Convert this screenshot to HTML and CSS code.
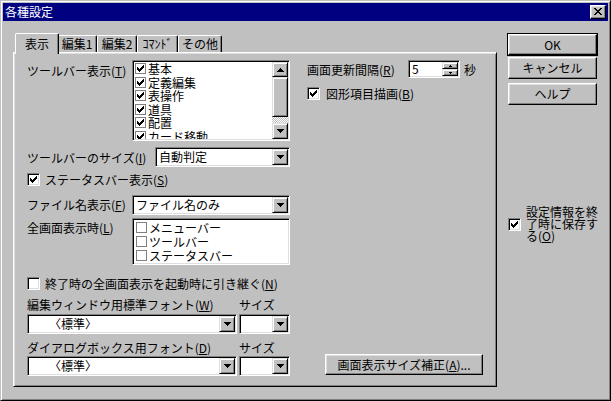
FILE: index.html
```html
<!DOCTYPE html>
<html lang="ja">
<head>
<meta charset="utf-8">
<title>各種設定</title>
<link rel="stylesheet" href="styles.css">
</head>
<body>
<div class="window">
  <div class="titlebar">
    <span class="title">各種設定</span>
    <span class="close-btn">
      <svg class="px" width="8" height="7" viewBox="0 0 8 7"><path d="M0 0h2v1h-2zM6 0h2v1h-2zM1 1h2v1h-2zM5 1h2v1h-2zM2 2h4v1h-4zM3 3h2v1h-2zM2 4h4v1h-4zM1 5h2v1h-2zM5 5h2v1h-2zM0 6h2v1h-2zM6 6h2v1h-2z"/></svg>
    </span>
  </div>
  <div class="body">
    <div class="tabarea">
      <div class="tabs">
        <div class="tab active w44">表示</div>
        <div class="tab w38">編集1</div>
        <div class="tab w40">編集2</div>
        <div class="tab w41">ｺﾏﾝﾄﾞ</div>
        <div class="tab w44b">その他</div>
      </div>
      <div class="panel">
        <div class="col-left">
          <div class="row r-toolbar">
            <div class="lbl lbl105 pt4">ツールバー表示(<u>T</u>)</div>
            <div class="listbox lb-toolbar">
              <div class="items items-toolbar">
                <div class="item"><span class="mini-chk"><svg class="px" width="9" height="9" viewBox="0 0 9 9"><path d="M7 1h1v1h-1zM6 2h2v1h-2zM1 3h1v1h-1zM5 3h3v1h-3zM1 4h2v1h-2zM4 4h3v1h-3zM1 5h5v1h-5zM2 6h3v1h-3zM3 7h1v1h-1z"/></svg></span>基本</div>
                <div class="item"><span class="mini-chk"><svg class="px" width="9" height="9" viewBox="0 0 9 9"><path d="M7 1h1v1h-1zM6 2h2v1h-2zM1 3h1v1h-1zM5 3h3v1h-3zM1 4h2v1h-2zM4 4h3v1h-3zM1 5h5v1h-5zM2 6h3v1h-3zM3 7h1v1h-1z"/></svg></span>定義編集</div>
                <div class="item"><span class="mini-chk"><svg class="px" width="9" height="9" viewBox="0 0 9 9"><path d="M7 1h1v1h-1zM6 2h2v1h-2zM1 3h1v1h-1zM5 3h3v1h-3zM1 4h2v1h-2zM4 4h3v1h-3zM1 5h5v1h-5zM2 6h3v1h-3zM3 7h1v1h-1z"/></svg></span>表操作</div>
                <div class="item"><span class="mini-chk"><svg class="px" width="9" height="9" viewBox="0 0 9 9"><path d="M7 1h1v1h-1zM6 2h2v1h-2zM1 3h1v1h-1zM5 3h3v1h-3zM1 4h2v1h-2zM4 4h3v1h-3zM1 5h5v1h-5zM2 6h3v1h-3zM3 7h1v1h-1z"/></svg></span>道具</div>
                <div class="item"><span class="mini-chk"><svg class="px" width="9" height="9" viewBox="0 0 9 9"><path d="M7 1h1v1h-1zM6 2h2v1h-2zM1 3h1v1h-1zM5 3h3v1h-3zM1 4h2v1h-2zM4 4h3v1h-3zM1 5h5v1h-5zM2 6h3v1h-3zM3 7h1v1h-1z"/></svg></span>配置</div>
                <div class="item"><span class="mini-chk"><svg class="px" width="9" height="9" viewBox="0 0 9 9"><path d="M7 1h1v1h-1zM6 2h2v1h-2zM1 3h1v1h-1zM5 3h3v1h-3zM1 4h2v1h-2zM4 4h3v1h-3zM1 5h5v1h-5zM2 6h3v1h-3zM3 7h1v1h-1z"/></svg></span>カード移動</div>
              </div>
              <div class="scrollbar">
                <div class="sb-btn sb-up"><svg class="px" width="7" height="4" viewBox="0 0 7 4"><path d="M3 0h1v1h-1zM2 1h3v1h-3zM1 2h5v1h-5zM0 3h7v1h-7z"/></svg></div>
                <div class="sb-thumb"></div>
                <div class="sb-track"></div>
                <div class="sb-btn sb-down"><svg class="px" width="7" height="4" viewBox="0 0 7 4"><path d="M0 0h7v1h-7zM1 1h5v1h-5zM2 2h3v1h-3zM3 3h1v1h-1z"/></svg></div>
              </div>
            </div>
          </div>

          <div class="row r-size">
            <div class="lbl lbl128">ツールバーのサイズ(<u>I</u>)</div>
            <div class="combo w135">
              <span class="combo-text">自動判定</span>
              <span class="dd"><svg class="px" width="7" height="4" viewBox="0 0 7 4"><path d="M0 0h7v1h-7zM1 1h5v1h-5zM2 2h3v1h-3zM3 3h1v1h-1z"/></svg></span>
            </div>
          </div>

          <div class="chkrow r-status">
            <span class="chk"><svg class="px" width="11" height="11" viewBox="0 0 11 11"><path d="M8 2h1v1h-1zM7 3h2v1h-2zM2 4h1v1h-1zM6 4h3v1h-3zM2 5h2v1h-2zM5 5h3v1h-3zM2 6h5v1h-5zM3 7h3v1h-3zM4 8h1v1h-1z"/></svg></span>
            <span>ステータスバー表示(<u>S</u>)</span>
          </div>

          <div class="row r-file">
            <div class="lbl lbl105 pt3">ファイル名表示(<u>F</u>)</div>
            <div class="combo w158">
              <span class="combo-text">ファイル名のみ</span>
              <span class="dd"><svg class="px" width="7" height="4" viewBox="0 0 7 4"><path d="M0 0h7v1h-7zM1 1h5v1h-5zM2 2h3v1h-3zM3 3h1v1h-1z"/></svg></span>
            </div>
          </div>

          <div class="row r-full">
            <div class="lbl lbl105 pt3">全画面表示時(<u>L</u>)</div>
            <div class="listbox lb-full">
              <div class="items items-full">
                <div class="item item14"><span class="mini-chk"></span>メニューバー</div>
                <div class="item item14"><span class="mini-chk"></span>ツールバー</div>
                <div class="item item14"><span class="mini-chk"></span>ステータスバー</div>
              </div>
            </div>
          </div>

          <div class="chkrow r-keep">
            <span class="chk"></span>
            <span>終了時の全画面表示を起動時に引き継ぐ(<u>N</u>)</span>
          </div>

          <div class="row r-lbl1">
            <div class="lbl lbl212">編集ウィンドウ用標準フォント(<u>W</u>)</div>
            <div class="lbl">サイズ</div>
          </div>
          <div class="row r-cmb1">
            <div class="combo w210">
              <span class="combo-text indent">〈標準〉</span>
              <span class="dd"><svg class="px" width="7" height="4" viewBox="0 0 7 4"><path d="M0 0h7v1h-7zM1 1h5v1h-5zM2 2h3v1h-3zM3 3h1v1h-1z"/></svg></span>
            </div>
            <div class="combo w51">
              <span class="combo-text"></span>
              <span class="dd"><svg class="px" width="7" height="4" viewBox="0 0 7 4"><path d="M0 0h7v1h-7zM1 1h5v1h-5zM2 2h3v1h-3zM3 3h1v1h-1z"/></svg></span>
            </div>
          </div>

          <div class="row r-lbl2">
            <div class="lbl lbl212">ダイアログボックス用フォント(<u>D</u>)</div>
            <div class="lbl">サイズ</div>
          </div>
          <div class="row r-cmb2">
            <div class="combo w210">
              <span class="combo-text indent">〈標準〉</span>
              <span class="dd"><svg class="px" width="7" height="4" viewBox="0 0 7 4"><path d="M0 0h7v1h-7zM1 1h5v1h-5zM2 2h3v1h-3zM3 3h1v1h-1z"/></svg></span>
            </div>
            <div class="combo w51">
              <span class="combo-text"></span>
              <span class="dd"><svg class="px" width="7" height="4" viewBox="0 0 7 4"><path d="M0 0h7v1h-7zM1 1h5v1h-5zM2 2h3v1h-3zM3 3h1v1h-1z"/></svg></span>
            </div>
          </div>
        </div>

        <div class="col-right">
          <div class="row r-interval">
            <div class="lbl lbl101">画面更新間隔(<u>R</u>)</div>
            <div class="spin">
              <span class="spin-text">5</span>
              <span class="spin-btns">
                <span class="spin-btn"><svg class="px" width="3" height="2" viewBox="0 0 3 2"><path d="M1 0h1v1h-1zM0 1h3v1h-3z"/></svg></span>
                <span class="spin-btn"><svg class="px" width="3" height="2" viewBox="0 0 3 2"><path d="M0 0h3v1h-3zM1 1h1v1h-1z"/></svg></span>
              </span>
            </div>
            <span class="unit">秒</span>
          </div>
          <div class="chkrow r-shape">
            <span class="chk"><svg class="px" width="11" height="11" viewBox="0 0 11 11"><path d="M8 2h1v1h-1zM7 3h2v1h-2zM2 4h1v1h-1zM6 4h3v1h-3zM2 5h2v1h-2zM5 5h3v1h-3zM2 6h5v1h-5zM3 7h3v1h-3zM4 8h1v1h-1z"/></svg></span>
            <span>図形項目描画(<u>B</u>)</span>
          </div>
          <div class="btn btn-adjust">画面表示サイズ補正(<u>A</u>)...</div>
        </div>
      </div>
    </div>

    <div class="side">
      <div class="btn btn-side default">OK</div>
      <div class="btn btn-side cancel">キャンセル</div>
      <div class="btn btn-side help">ヘルプ</div>
      <div class="save">
        <span class="chk"><svg class="px" width="11" height="11" viewBox="0 0 11 11"><path d="M8 2h1v1h-1zM7 3h2v1h-2zM2 4h1v1h-1zM6 4h3v1h-3zM2 5h2v1h-2zM5 5h3v1h-3zM2 6h5v1h-5zM3 7h3v1h-3zM4 8h1v1h-1z"/></svg></span>
        <span class="save-text">設定情報を終了時に保存する(<u>O</u>)</span>
      </div>
    </div>
  </div>
</div>
</body>
</html>
```
FILE: styles.css
```css
html, body {
  margin: 0;
  padding: 0;
  background: #c0c0c0;
}
body {
  font-family: "Noto Sans CJK JP", "Noto Sans", sans-serif;
  font-size: 12px;
  color: #000;
  line-height: 13px;
}
.px {
  display: block;
  shape-rendering: crispEdges;
  fill: #000;
}
.window {
  width: 611px;
  height: 401px;
  box-sizing: border-box;
  border: 1px solid;
  border-color: #c0c0c0 #000 #000 #c0c0c0;
  box-shadow: inset 1px 1px #fff, inset -1px -1px #808080;
  padding: 2px;
  background: #c0c0c0;
  display: flex;
  flex-direction: column;
}
.titlebar {
  height: 18px;
  background: #000080;
  color: #fff;
  display: flex;
  align-items: center;
  justify-content: space-between;
  padding-left: 2px;
}
.title {
  line-height: 18px;
}
.close-btn {
  width: 16px;
  height: 14px;
  box-sizing: border-box;
  border: 1px solid;
  border-color: #fff #000 #000 #fff;
  box-shadow: inset -1px -1px #808080, inset 1px 1px #dfdfdf;
  background: #c0c0c0;
  margin-right: 2px;
  display: flex;
  align-items: center;
  justify-content: center;
  padding: 0 1px 1px 0;
}
.body {
  display: flex;
  padding: 12px 0 0 10px;
}
.tabarea {
  width: 484px;
}
.tabs {
  display: flex;
  height: 19px;
  padding-left: 2px;
  position: relative;
  z-index: 1;
}
.tab {
  box-sizing: border-box;
  margin-top: 2px;
  height: 17px;
  border-top: 1px solid #fff;
  border-left: 1px solid #fff;
  border-right: 1px solid #000;
  box-shadow: inset -1px 0 #808080;
  border-radius: 2px 2px 0 0;
  text-align: center;
  line-height: 14px;
  padding-top: 1px;
  background: #c0c0c0;
  white-space: nowrap;
}
.tab.active {
  margin-top: 0;
  height: 21px;
  padding-top: 3px;
  margin-right: -2px;
  position: relative;
  z-index: 2;
}
.w44 { width: 44px; }
.w38 { width: 40px; }
.w40 { width: 40px; }
.w41 { width: 41px; }
.w44b { width: 44px; }
.panel {
  width: 484px;
  height: 335px;
  box-sizing: border-box;
  border: 1px solid;
  border-color: #fff #000 #000 #fff;
  box-shadow: inset 1px 1px #dfdfdf, inset -1px -1px #808080;
  padding: 7px 0 0 13px;
  display: flex;
  gap: 17px;
}
.col-left {
  width: 263px;
  display: flex;
  flex-direction: column;
}
.col-right {
  width: 176px;
  display: flex;
  flex-direction: column;
}
.row {
  display: flex;
  align-items: flex-start;
}
.lbl {
  white-space: nowrap;
  line-height: 13px;
}
.lbl105 { width: 105px; }
.lbl128 { width: 128px; padding-top: 4px; }
.lbl212 { width: 212px; }
.lbl101 { width: 101px; }
.pt4 { padding-top: 4px; }
.pt3 { padding-top: 3px; }

.listbox, .combo, .spin {
  box-sizing: border-box;
  border: 1px solid;
  border-color: #808080 #fff #fff #808080;
  box-shadow: inset 1px 1px #000, inset -1px -1px #dfdfdf;
  background: #fff;
  padding: 1px;
  display: flex;
}
.lb-toolbar {
  width: 158px;
  height: 81px;
}
.lb-full {
  width: 158px;
  height: 47px;
}
.items {
  flex: 1;
  overflow: hidden;
}
.items-toolbar { padding-left: 1px; }
.items-full { padding-left: 2px; }
.item {
  height: 13.5px;
  display: flex;
  align-items: center;
  gap: 2px;
  white-space: nowrap;
}
.item14 { height: 14px; }
.mini-chk {
  width: 11px;
  height: 11px;
  box-sizing: border-box;
  border: 1px solid #808080;
  background: #fff;
  flex: none;
}
.scrollbar {
  width: 16px;
  display: flex;
  flex-direction: column;
}
.sb-btn, .sb-thumb, .dd, .spin-btn {
  box-sizing: border-box;
  border: 1px solid;
  border-color: #dfdfdf #000 #000 #dfdfdf;
  box-shadow: inset 1px 1px #fff, inset -1px -1px #808080;
  background: #c0c0c0;
  display: flex;
  align-items: center;
  justify-content: center;
}
.sb-up { height: 15px; }
.sb-thumb { height: 40px; }
.sb-track {
  height: 6px;
  background-color: #c0c0c0;
  background-image: repeating-conic-gradient(#fff 0 25%, #c0c0c0 0 50%);
  background-size: 2px 2px;
}
.sb-down { height: 16px; }

.combo {
  height: 20px;
}
.w135 { width: 135px; }
.w158 { width: 158px; }
.w210 { width: 210px; margin-right: 2px; }
.w51 { width: 51px; }
.combo-text {
  flex: 1;
  line-height: 16px;
  padding-left: 2px;
  white-space: nowrap;
  overflow: hidden;
}
.combo-text.indent { padding-left: 20px; }
.dd {
  width: 16px;
  height: 16px;
  flex: none;
}
.chkrow {
  display: flex;
  align-items: center;
  gap: 5px;
  height: 13px;
  white-space: nowrap;
}
.chk {
  width: 13px;
  height: 13px;
  box-sizing: border-box;
  border: 1px solid;
  border-color: #808080 #fff #fff #808080;
  box-shadow: inset 1px 1px #000, inset -1px -1px #dfdfdf;
  background: #fff;
  flex: none;
}
.r-size { margin-top: 6px; }
.r-status { margin-top: 6px; }
.r-file { margin-top: 9px; }
.r-full { margin-top: 3px; }
.r-keep { margin-top: 12px; }
.r-lbl1 { margin-top: 8px; }
.r-cmb1 { margin-top: 3px; }
.r-lbl2 { margin-top: 7px; }
.r-cmb2 { margin-top: 2px; }

.r-interval {
  align-items: center;
  height: 18px;
}
.spin {
  width: 52px;
  height: 18px;
}
.spin-text {
  flex: 1;
  padding-left: 2px;
  line-height: 14px;
}
.spin-btns {
  width: 16px;
  display: flex;
  flex-direction: column;
}
.spin-btn {
  height: 7px;
}
.unit {
  margin-left: 4px;
}
.r-shape {
  margin-top: 9px;
  gap: 6px;
}

.btn {
  box-sizing: border-box;
  border: 1px solid;
  border-color: #fff #000 #000 #fff;
  box-shadow: inset -1px -1px #808080, inset 1px 1px #dfdfdf;
  background: #c0c0c0;
  text-align: center;
  white-space: nowrap;
}
.btn-adjust {
  margin-top: auto;
  margin-bottom: 11px;
  margin-left: 18px;
  width: 158px;
  height: 21px;
  line-height: 19px;
}
.side {
  width: 89px;
  margin-left: 11px;
  display: flex;
  flex-direction: column;
}
.btn-side {
  height: 22px;
  line-height: 20px;
}
.default {
  outline: 1px solid #000;
  margin-top: 1px;
  height: 21px;
  line-height: 19px;
}
.cancel { margin-top: 2px; }
.help { margin-top: 4px; }
.save {
  margin-top: 101px;
  display: flex;
  align-items: center;
  gap: 5px;
}
.save-text {
  flex: none;
  width: 73px;
  line-height: 12px;
  word-break: break-all;
  line-break: anywhere;
}
```
